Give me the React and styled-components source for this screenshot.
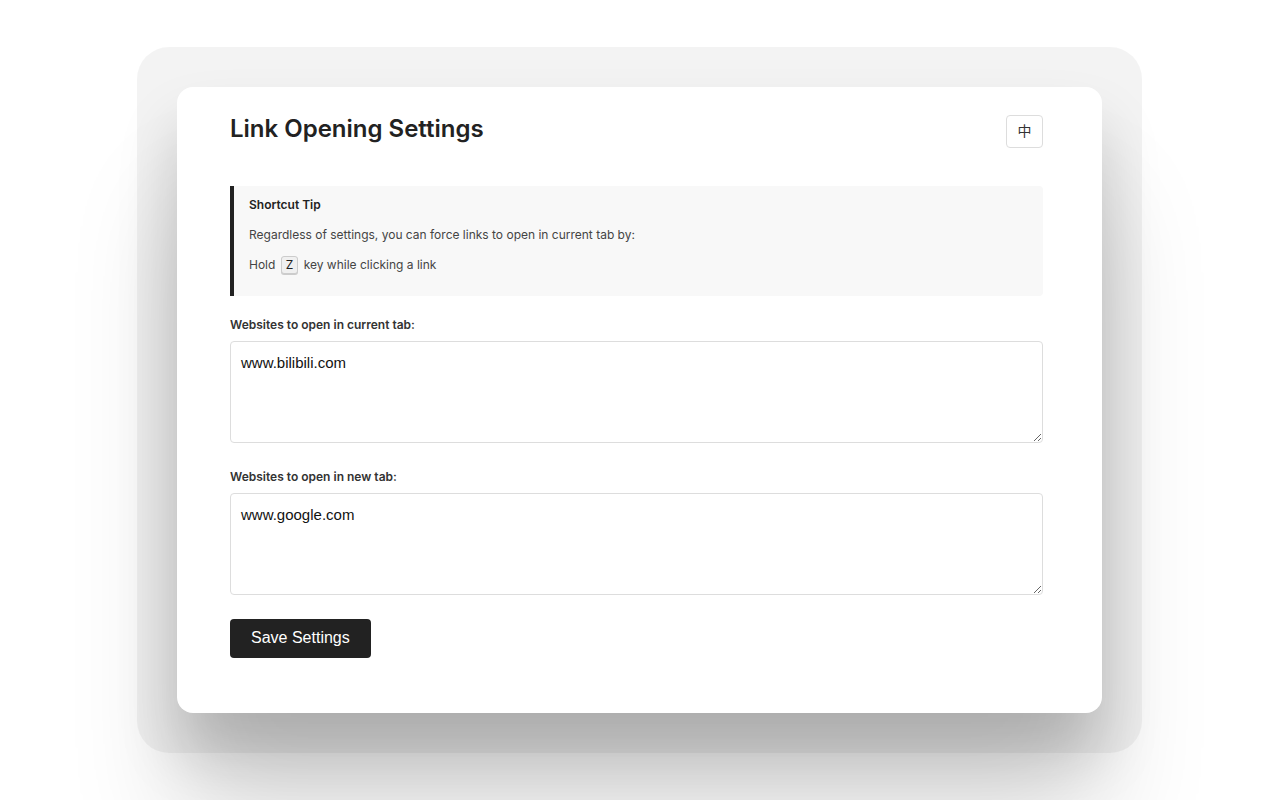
import React, { useState } from "react";
import styled, { createGlobalStyle } from "styled-components";

const GlobalStyle = createGlobalStyle`
  *, *::before, *::after { box-sizing: border-box; }
  body {
    margin: 0;
    background: #fff;
    color: #222;
    font-family: Inter, "Noto Sans CJK SC", sans-serif;
    overflow-x: hidden;
  }
`;

const Page = styled.div`
  display: flex;
  justify-content: center;
  padding: 47px 25px 47px 24px;
`;

const Frame = styled.div`
  width: 100%;
  max-width: 1005px;
  padding: 40px;
  border-radius: 32px;
  background: rgba(0, 0, 0, 0.047);
`;

const Card = styled.main`
  padding: 28px 59px 55px 53px;
  border-radius: 16px;
  background: #fff;
  box-shadow:
    0 40px 60px rgba(0, 0, 0, 0.17),
    0 110px 110px rgba(0, 0, 0, 0.15);
`;

const Header = styled.header`
  display: flex;
  align-items: flex-start;
  justify-content: space-between;
  margin-bottom: 38px;
`;

const Title = styled.h1`
  margin: 0;
  font-size: 24px;
  line-height: 28px;
  font-weight: 600;
`;

const LanguageButton = styled.button`
  width: 37px;
  height: 33px;
  padding: 0 0 3px;
  border: 1px solid #ddd;
  border-radius: 4px;
  background: #fff;
  color: #333;
  font: 14px/20px "Noto Sans CJK SC", sans-serif;
  cursor: pointer;
`;

const Tip = styled.section`
  display: flex;
  flex-direction: column;
  gap: 10px;
  min-height: 110px;
  padding: 9px 15px;
  border-left: 4px solid #222;
  border-radius: 0 4px 4px 0;
  background: #f8f8f8;
`;

const TipTitle = styled.h2`
  margin: 0;
  font-size: 12px;
  line-height: 20px;
  font-weight: 600;
`;

const TipText = styled.p`
  margin: 0;
  color: #444;
  font-size: 12px;
  line-height: 20px;
`;

const Key = styled.kbd`
  display: inline-block;
  margin: 0 2px;
  padding: 0 4px;
  border: 1px solid #ccc;
  border-radius: 3px;
  background: #f0f0f0;
  box-shadow: 0 1px 0 #ccc;
  color: #222;
  font-family: inherit;
  font-size: 12px;
  line-height: 16px;
`;

const Field = styled.div`
  display: flex;
  flex-direction: column;
  gap: 6px;
  margin-top: ${({ $gap }) => $gap || "24px"};
`;

const Label = styled.label`
  color: #333;
  font-size: 12px;
  line-height: 20px;
  font-weight: 600;
`;

const SiteList = styled.textarea`
  display: block;
  width: 100%;
  height: 102px;
  padding: 10px;
  border: 1px solid #ddd;
  border-radius: 4px;
  background: #fff;
  color: #111;
  font: 15px/22px "Liberation Sans", sans-serif;
  resize: vertical;
`;

const SaveButton = styled.button`
  display: block;
  height: 39px;
  margin-top: 24px;
  padding: 0 21px 1px;
  border: 0;
  border-radius: 4px;
  background: #222;
  color: #fff;
  font: 16px/20px "Liberation Sans", sans-serif;
  cursor: pointer;
`;

export default function App() {
  const [currentTab, setCurrentTab] = useState("www.bilibili.com");
  const [newTab, setNewTab] = useState("www.google.com");

  return (
    <>
      <GlobalStyle />
      <Page>
        <Frame>
          <Card>
            <Header>
              <Title>Link Opening Settings</Title>
              <LanguageButton type="button">中</LanguageButton>
            </Header>
            <Tip>
              <TipTitle>Shortcut Tip</TipTitle>
              <TipText>Regardless of settings, you can force links to open in current tab by:</TipText>
              <TipText>
                Hold <Key>Z</Key> key while clicking a link
              </TipText>
            </Tip>
            <Field $gap="19px">
              <Label htmlFor="current-tab">Websites to open in current tab:</Label>
              <SiteList
                id="current-tab"
                spellCheck={false}
                value={currentTab}
                onChange={(e) => setCurrentTab(e.target.value)}
              />
            </Field>
            <Field>
              <Label htmlFor="new-tab">Websites to open in new tab:</Label>
              <SiteList
                id="new-tab"
                spellCheck={false}
                value={newTab}
                onChange={(e) => setNewTab(e.target.value)}
              />
            </Field>
            <SaveButton type="button">Save Settings</SaveButton>
          </Card>
        </Frame>
      </Page>
    </>
  );
}
